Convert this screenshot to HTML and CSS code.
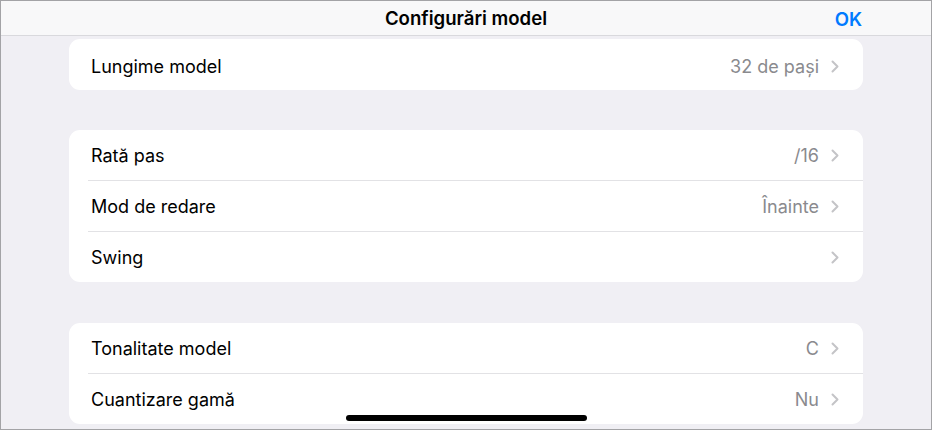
FILE: index.html
```html
<!DOCTYPE html>
<html>
  <head>
    <title>Configurări model</title>
    <link rel="stylesheet" href="styles.css">
  </head>
  <body>
    <div class="screen">
      <header class="navbar">
        <h1 class="navbar-title">Configurări model</h1>
        <button class="navbar-done">OK</button>
      </header>

      <main class="content">
        <section class="group group-first">
          <div class="row">
            <span class="row-label">Lungime model</span>
            <span class="row-value">32 de pași</span>
            <svg class="chevron" viewBox="0 0 8 13"><polyline points="1.5,1.5 6.5,6.5 1.5,11.5" /></svg>
          </div>
        </section>

        <section class="group">
          <div class="row">
            <span class="row-label">Rată pas</span>
            <span class="row-value">/16</span>
            <svg class="chevron" viewBox="0 0 8 13"><polyline points="1.5,1.5 6.5,6.5 1.5,11.5" /></svg>
          </div>
          <div class="row">
            <span class="row-label">Mod de redare</span>
            <span class="row-value">Înainte</span>
            <svg class="chevron" viewBox="0 0 8 13"><polyline points="1.5,1.5 6.5,6.5 1.5,11.5" /></svg>
          </div>
          <div class="row">
            <span class="row-label">Swing</span>
            <span class="row-value"></span>
            <svg class="chevron" viewBox="0 0 8 13"><polyline points="1.5,1.5 6.5,6.5 1.5,11.5" /></svg>
          </div>
        </section>

        <section class="group">
          <div class="row">
            <span class="row-label">Tonalitate model</span>
            <span class="row-value">C</span>
            <svg class="chevron" viewBox="0 0 8 13"><polyline points="1.5,1.5 6.5,6.5 1.5,11.5" /></svg>
          </div>
          <div class="row">
            <span class="row-label">Cuantizare gamă</span>
            <span class="row-value">Nu</span>
            <svg class="chevron" viewBox="0 0 8 13"><polyline points="1.5,1.5 6.5,6.5 1.5,11.5" /></svg>
          </div>
        </section>
      </main>

      <div class="home-indicator"></div>
    </div>
  </body>
</html>
```

FILE: styles.css
```css
*,
*::before,
*::after {
  margin: 0;
  padding: 0;
  box-sizing: border-box;
}

body {
  background: #fff;
  font-family: "Inter", "Noto Sans", sans-serif;
  color: #000;
}

.screen {
  position: relative;
  width: 932px;
  height: 430px;
  border: 1px solid #a3a3a6;
  background: #f0eff4;
  overflow: hidden;
}

.navbar {
  display: flex;
  align-items: center;
  justify-content: center;
  height: 35px;
  background: #f8f8f9;
  border-bottom: 1px solid #d9d9dd;
  position: relative;
}

.navbar-title {
  font-size: 18.6px;
  font-weight: 600;
}

.navbar-done {
  position: absolute;
  right: 69px;
  top: 7px;
  border: none;
  background: none;
  font-family: inherit;
  font-size: 18.6px;
  font-weight: 600;
  color: #007aff;
}

.content {
  padding: 3px 0 0 68px;
}

.group {
  width: 794px;
  background: #fff;
  border-radius: 11px;
  margin-bottom: 41px;
  overflow: hidden;
}

.row {
  display: flex;
  align-items: center;
  height: 50px;
  padding: 0 24px 0 22px;
}

.group-first .row {
  height: 51px;
  padding-top: 3px;
}

.group-first {
  margin-bottom: 40px;
}

.row + .row {
  height: 51px;
  border-top: 1px solid #e2e2e5;
  margin-left: 19px;
  padding-left: 3px;
}

.row-label {
  flex: 1;
  font-size: 18px;
}

.row-value {
  font-size: 18px;
  color: #8a8a8e;
  margin-right: 12px;
}

.chevron {
  width: 8px;
  height: 13px;
  fill: none;
  stroke: #c4c4c7;
  stroke-width: 2;
  stroke-linecap: round;
  stroke-linejoin: round;
}

.home-indicator {
  position: absolute;
  left: 345px;
  bottom: 8px;
  width: 241px;
  height: 6px;
  border-radius: 3px;
  background: #000;
}
```
